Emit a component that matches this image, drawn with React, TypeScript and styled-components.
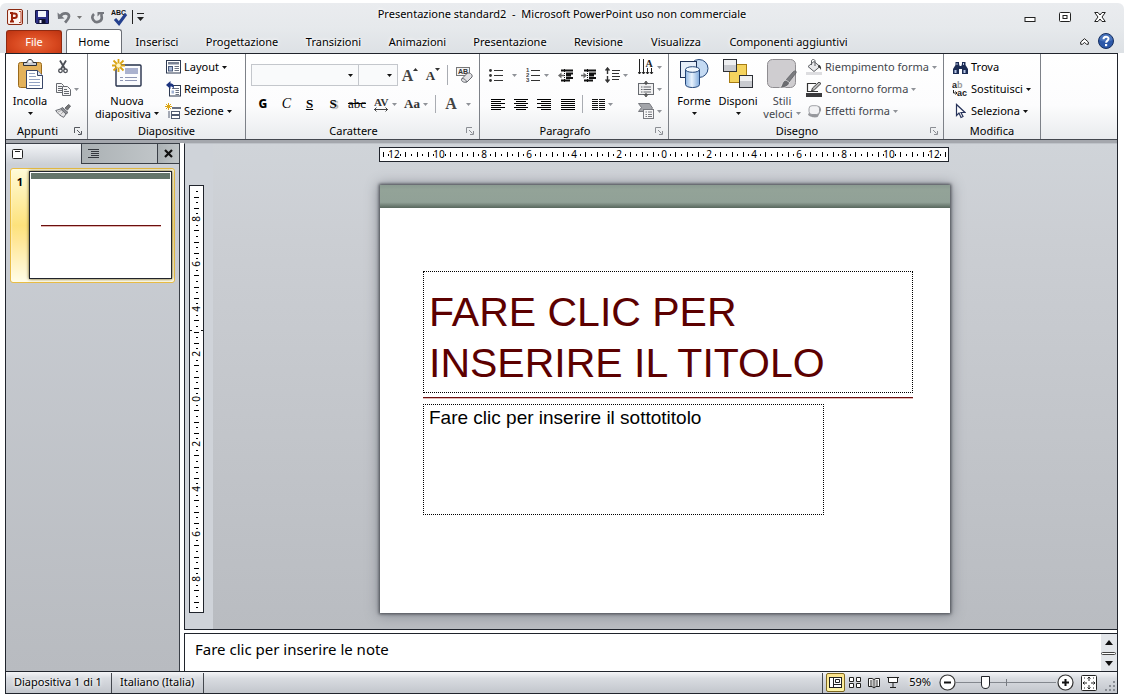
import React from "react";
import styled, { createGlobalStyle, css } from "styled-components";

const ui = `"Noto Sans", "Open Sans", "Liberation Sans", sans-serif`;
const serif = `"Liberation Serif", serif`;
const ink = "#000";
const muted = "#43464c";
const edge = "#20242c";

const GlobalStyle = createGlobalStyle`
  * { box-sizing: border-box; }
  body { margin: 0; background: #fff; font-family: ${ui}; font-size: 11px; line-height: 14px; color: ${ink}; }
  button, select, textarea, input { font: inherit; color: inherit; margin: 0; }
  svg { display: block; flex: none; }
`;

const halo = css`text-shadow: 0 0 3px #fff, 0 0 5px #fff;`;

const Window = styled.div`
  min-height: 100vh;
  display: flex;
  flex-direction: column;
  padding: 3px 0 6px;
`;

/* ---------- title bar and tabs ---------- */

const Header = styled.header`
  background: linear-gradient(#eaecef, #e6e9ec 50%, #dde1e5);
  border-radius: 6px 6px 0 0;
`;

const TitleBar = styled.div`
  height: 26px;
  display: grid;
  grid-template-columns: 1fr auto 1fr;
  align-items: center;
`;

const QuickAccess = styled.div`
  display: flex;
  align-items: center;
  padding-left: 4px;
  padding-top: 2px;
`;

const PlainButton = styled.button<{ $w: number; $h?: number; $muted?: boolean }>`
  width: ${(p) => p.$w}px;
  height: ${(p) => p.$h ?? 22}px;
  flex: none;
  display: flex;
  align-items: center;
  justify-content: center;
  gap: 3px;
  padding: 0;
  border: 0;
  background: none;
  color: ${(p) => (p.$muted ? muted : ink)};
`;

const Title = styled.h1`
  margin: 0;
  padding-bottom: 4px;
  font-size: 11px;
  line-height: 14px;
  font-weight: 400;
  white-space: pre;
  ${halo}
`;

const WindowButtons = styled.div`
  display: flex;
  justify-content: flex-end;
  padding-right: 7px;
  padding-top: 2px;
`;

const TabBar = styled.nav`
  height: 24px;
  display: flex;
  align-items: flex-end;
  padding: 0 9px 0 6px;
`;

const FileTab = styled.button`
  width: 56px;
  height: 23px;
  padding: 0;
  margin-right: 4px;
  border: 1px solid #8e2a12;
  border-bottom: 0;
  border-radius: 3px 3px 0 0;
  background: radial-gradient(ellipse at 50% 60%, #e8683c, #d8481f 55%, #bb3311);
  color: #fff;
`;

const Tab = styled.button<{ $w: number; $active?: boolean }>`
  width: ${(p) => p.$w}px;
  height: 24px;
  flex: none;
  padding: 0;
  white-space: nowrap;
  border: 1px solid ${(p) => (p.$active ? "#6b6f76" : "transparent")};
  border-bottom: 0;
  border-radius: 3px 3px 0 0;
  background: ${(p) => (p.$active ? "#fff" : "none")};
  ${halo}
`;

const TabTools = styled.div`
  margin-left: auto;
  display: flex;
  align-items: center;
  height: 24px;
  gap: 2px;
`;

/* ---------- ribbon ---------- */

const Frame = styled.div`
  flex: 1;
  display: flex;
  flex-direction: column;
  margin: 0 6px 0 5px;
  border: 1px solid ${edge};
`;

const Ribbon = styled.div`
  height: 86px;
  display: flex;
  background: linear-gradient(#fff, #fcfcfd 60%, #e9ebee);
  border-bottom: 1px solid #44484f;
`;

const Group = styled.section<{ $w: number }>`
  width: ${(p) => p.$w}px;
  flex: none;
  display: grid;
  grid-template-rows: 68px 15px;
  padding-top: 1px;
  border-right: 1px solid #7d8188;
`;

const GroupBody = styled.div<{ $pad?: number }>`
  display: flex;
  align-items: flex-start;
  padding-left: ${(p) => p.$pad ?? 0}px;
`;

const GroupFooter = styled.div<{ $launcher: boolean }>`
  display: grid;
  grid-template-columns: ${(p) => (p.$launcher ? "1fr 18px" : "1fr")};
  align-items: center;
  > button { margin-left: 4px; }
`;

const GroupName = styled.h2`
  margin: 0;
  font-size: 11px;
  line-height: 14px;
  font-weight: 400;
  text-align: center;
`;

const BigButton = styled.button<{ $w: number; $muted?: boolean }>`
  width: ${(p) => p.$w}px;
  height: 68px;
  flex: none;
  display: flex;
  flex-direction: column;
  align-items: center;
  padding: 3px 0 0;
  border: 0;
  background: none;
  color: ${(p) => (p.$muted ? muted : ink)};
  line-height: 13px;
  white-space: nowrap;
`;

const BigIcon = styled.span`
  height: 36px;
  display: flex;
  align-items: flex-start;
  padding-top: 1px;
`;

const ArrowLine = styled.span`
  height: 13px;
  display: flex;
  align-items: center;
  gap: 3px;
`;

const Stack = styled.div<{ $ml?: number }>`
  display: flex;
  flex-direction: column;
  align-items: flex-start;
  padding-top: 1px;
  margin-left: ${(p) => p.$ml ?? 0}px;
`;

const RowButton = styled.button<{ $muted?: boolean }>`
  height: 22px;
  display: flex;
  align-items: center;
  gap: 3px;
  padding: 0;
  border: 0;
  background: none;
  white-space: nowrap;
  color: ${(p) => (p.$muted ? muted : ink)};
`;

const RowIcon = styled.span`
  width: 16px;
  display: flex;
  justify-content: center;
`;

const Rows = styled.div`
  display: flex;
  flex-direction: column;
  gap: 7px;
  padding-top: 9px;
`;

const Row = styled.div`
  height: 22px;
  display: flex;
  align-items: center;
`;

const ComboWrap = styled.label<{ $w: number }>`
  width: ${(p) => p.$w}px;
  height: 22px;
  display: grid;
  align-items: center;
  justify-items: end;
  margin-right: -1px;
  > * { grid-area: 1 / 1; }
  > svg { margin-right: 6px; pointer-events: none; }
`;

const Combo = styled.select`
  appearance: none;
  width: 100%;
  height: 22px;
  padding: 0 4px;
  border: 1px solid #c4c7cc;
  border-radius: 0;
  background: #f9fafb;
`;

const Divider = styled.span<{ $h?: number; $mx?: number; $c?: string }>`
  width: 1px;
  height: ${(p) => p.$h ?? 18}px;
  margin: 0 ${(p) => p.$mx ?? 4}px;
  flex: none;
  background: ${(p) => p.$c ?? "#a9acb2"};
`;

const Glyph = styled.span<{ $kind: "bold" | "italic" | "under" | "shadow" | "strike" | "serif" | "large" | "small" }>`
  font-family: ${serif};
  font-size: 13px;
  line-height: 16px;
  ${(p) => p.$kind === "bold" && css`font-family: ${ui}; font-size: 12px; font-weight: 800;`}
  ${(p) => p.$kind === "italic" && css`font-style: italic; font-size: 14px;`}
  ${(p) => p.$kind === "under" && css`font-weight: 700; text-decoration: underline;`}
  ${(p) => p.$kind === "shadow" && css`font-weight: 700; text-shadow: 2px 1px 1px #999;`}
  ${(p) => p.$kind === "strike" && css`text-decoration: line-through;`}
  ${(p) => p.$kind === "serif" && css`font-weight: 700; color: #333;`}
  ${(p) => p.$kind === "large" && css`font-weight: 700; font-size: 16px; line-height: 20px; color: #444;`}
  ${(p) => p.$kind === "small" && css`font-weight: 700; font-size: 13px; line-height: 20px; color: #333;`}
`;

const SizeButton = styled.button<{ $w: number }>`
  width: ${(p) => p.$w}px;
  height: 22px;
  display: flex;
  align-items: flex-start;
  justify-content: center;
  padding: 2px 0 0;
  border: 0;
  background: none;
`;

/* ---------- work area ---------- */

const Main = styled.main`
  flex: 1;
  display: grid;
  grid-template-columns: 174px 1fr;
  column-gap: 4px;
  border-top: 3px solid #a4a7ad;
`;

const Outline = styled.aside`
  display: flex;
  flex-direction: column;
  border: 1px solid #3a3f47;
  border-left: 0;
  border-bottom: 0;
  background: linear-gradient(#cdd1d7, #b8bbc0);
`;

const PaneTabs = styled.div`
  height: 20px;
  display: grid;
  grid-template-columns: 75px 76px 1fr;
`;

const PaneTab = styled.button<{ $active?: boolean }>`
  display: flex;
  align-items: center;
  padding: 0 0 0 6px;
  border: 0;
  border-left: ${(p) => (p.$active ? "0" : "1px solid #3a3f47")};
  border-bottom: ${(p) => (p.$active ? "0" : "1px solid #3a3f47")};
  background: ${(p) => (p.$active ? "linear-gradient(#f2f4f7, #cdd1d7)" : "linear-gradient(90deg, #abb1b4, #c0c5c8)")};
`;

const Thumb = styled.a`
  margin: 4px 4px 0;
  height: 115px;
  display: grid;
  grid-template-columns: 18px 1fr;
  padding: 2px 2px 3px 0;
  border: 1px solid #e8bd45;
  border-radius: 3px;
  background: linear-gradient(#fffbd8, #fde27c 50%, #ffe694 62%, #fffde8);
  box-shadow: inset 0 0 2px #fff;
  color: ${ink};
  text-decoration: none;
`;

const ThumbNumber = styled.span`
  padding-top: 4px;
  text-align: center;
  font-weight: 700;
`;

const ThumbSlide = styled.span`
  display: flex;
  flex-direction: column;
  border: 1px solid ${edge};
  padding: 1px;
  background: #fff;
  box-shadow: 0 0 3px #5a4a10;
`;

const ThumbBand = styled.span`
  height: 6px;
  background: #64756a;
`;

const ThumbRule = styled.span`
  height: 1px;
  margin: 46px 9px 0 10px;
  background: #6b0f0f;
  box-shadow: 0 1px 0 #e0b5b0;
`;

const Editor = styled.div`
  display: grid;
  grid-template-rows: 1fr 38px;
  row-gap: 3px;
  min-width: 0;
`;

const Stage = styled.div`
  display: grid;
  grid-template-columns: 28px 1fr;
  grid-template-rows: 20px 1fr;
  border: 1px solid ${edge};
  border-top-color: #bfc3c9;
  border-right: 0;
  background: linear-gradient(#d0d4d9, #cbced3 20%, #b9bcc1);
`;

const RulerTop = styled.div`
  grid-column: 2;
  display: flex;
  justify-content: center;
  padding: 3px 2px 0 0;
`;

const RulerSide = styled.div`
  grid-row: 1 / 3;
  grid-column: 1;
  padding: 41px 0 0 4px;
  background: #cfd3d9;
`;

const Canvas = styled.div`
  display: flex;
  justify-content: center;
  align-items: flex-start;
  padding: 21px 0 15px;
`;

const Slide = styled.article`
  width: 570px;
  min-height: 428px;
  background: #fff;
  box-shadow: 0 0 3px 1px #45494f, 0 1px 12px 2px #8b8f96;
`;

const Band = styled.div`
  height: 23px;
  margin-bottom: 63px;
  background: linear-gradient(#8b9b91, #93a398 20%, #91a197 75%, #57665c);
`;

const TitleBox = styled.div`
  width: 490px;
  height: 122px;
  margin-left: 43px;
  padding: 15px 5px 0;
  border: 1px dotted #000;
`;

const SlideTitle = styled.h3`
  margin: 0;
  font: 400 41px/51px "Liberation Sans", Arial, sans-serif;
  color: #5c0000;
`;

const RedRule = styled.hr`
  width: 490px;
  height: 1px;
  margin: 4px 0 6px 43px;
  border: 0;
  background: #6b0f0f;
  box-shadow: 0 1px 0 #e3b9b4;
`;

const SubtitleBox = styled.div`
  width: 401px;
  height: 111px;
  margin-left: 43px;
  padding: 2px 5px;
  border: 1px dotted #000;
  font: 400 19px/22px "Liberation Sans", Arial, sans-serif;
`;

const NotesPane = styled.div`
  display: grid;
  grid-template-columns: 1fr 16px;
  border: 1px solid ${edge};
  border-right: 0;
  border-bottom: 0;
  background: #fff;
`;

const Notes = styled.textarea`
  resize: none;
  border: 0;
  outline: 0;
  padding: 5px 10px;
  background: none;
  font-size: 15px;
  line-height: 20px;
  height: 37px;
  overflow: hidden;
`;

const Scroller = styled.div`
  display: flex;
  flex-direction: column;
  justify-content: space-between;
  background: #e3e6ea;
`;

/* ---------- status bar ---------- */

const StatusBar = styled.footer`
  height: 22px;
  display: flex;
  align-items: center;
  border-top: 1px solid ${edge};
  background: linear-gradient(#f4f5f7, #d9dce1 30%, #c2c6cc);
  white-space: nowrap;
`;

const StatusItem = styled.span<{ $w: number }>`
  width: ${(p) => p.$w}px;
  flex: none;
  padding: 0 0 2px 8px;
  ${halo}
`;

const Spacer = styled.span`
  flex: 1;
`;

const ViewButton = styled.button<{ $active?: boolean }>`
  width: 19px;
  height: 19px;
  display: flex;
  align-items: center;
  justify-content: center;
  padding: 0;
  border: 1px solid ${(p) => (p.$active ? "#7d6720" : "transparent")};
  border-radius: 2px;
  background: ${(p) => (p.$active ? "linear-gradient(#fbe28a, #fff6a8)" : "none")};
`;

const ZoomRange = styled.input`
  appearance: none;
  width: 100px;
  height: 16px;
  background:
    linear-gradient(#777b82, #777b82) 50% 50% / 1px 7px no-repeat,
    linear-gradient(#83878e, #83878e) 0 50% / 100% 1px no-repeat;
  &::-webkit-slider-thumb {
    appearance: none;
    width: 9px;
    height: 13px;
    border: 1px solid #22252b;
    border-radius: 1px 1px 5px 5px;
    background: #fff;
  }
`;

const ZoomValue = styled.output`
  width: 36px;
  padding-bottom: 2px;
  text-align: center;
  ${halo}
`;

/* ---------- small drawings ---------- */

const Arrow = ({ c = "#111" }: { c?: string }) => (
  <svg width="5" height="3" viewBox="0 0 5 3"><path d="M0 0h5L2.500 3z" fill={c} /></svg>
);
const grey = "#8f9298";

const Launcher = ({ c = "#8b8e94" }: { c?: string }) => (
  <svg width="8" height="8" viewBox="0 0 8 8" fill="none" stroke={c}>
    <path d="M.5 6V.5H6M3 3l3.500 3.500M7.500 4v3.500H4" />
  </svg>
);

const PptLogo = () => (
  <svg width="16" height="16" viewBox="0 0 16 16">
    <rect x=".5" y=".5" width="15" height="15" rx="1.500" fill="#fbe9e2" stroke="#8a2a12" />
    <path d="M11.500 2.500h2.500v11h-2.500z" fill="#fff" stroke="#b5452a" />
    <path d="M1.500 2.500L12 1v14L1.500 13.500z" fill="#fdf3ee" />
    <path d="M5 12.500V4.500h2.500a2.300 2.300 0 0 1 0 4.600H5M3 12.500h4M3 4h3" fill="none" stroke="#9c2208" strokeWidth="2" />
  </svg>
);
const Save = () => (
  <svg width="14" height="14" viewBox="0 0 14 14">
    <path d="M.5.5h13v13h-12l-1-1z" fill="#2b2f86" stroke="#12143f" />
    <rect x="3" y="1" width="8" height="6" fill="#f2f5fb" />
    <rect x="3.500" y="9" width="7" height="4.500" fill="#0d0f2c" />
    <rect x="4.500" y="10" width="2" height="3" fill="#eef" />
  </svg>
);
const Undo = () => (
  <svg width="14" height="13" viewBox="0 0 14 13" fill="none" stroke="#74777d">
    <path d="M3.500 5.500C5 1.500 12.300 1 12 5.500c-.2 2.500-2 4-4 6" strokeWidth="2.800" /><path d="M.5 1.500L1 8l6.500-.5z" fill="#74777d" stroke="none" />
  </svg>
);
const Redo = () => (
  <svg width="13" height="13" viewBox="0 0 13 13" fill="none" stroke="#74777d">
    <path d="M3 3A4.600 4.600 0 1 0 10.500 5V2.500" strokeWidth="2.600" /><path d="M6.500 5.500V1H13v2H9z" fill="#74777d" stroke="none" />
  </svg>
);
const Spell = () => (
  <svg width="17" height="17" viewBox="0 0 17 17">
    <text x="0" y="6" fontFamily="Liberation Sans" fontWeight="700" fontSize="7" fill="#111">ABC</text>
    <path d="M4 10l4 4.500L15 5" fill="none" stroke="#24408e" strokeWidth="3" />
  </svg>
);
const Customize = () => (
  <svg width="7" height="8" viewBox="0 0 7 8"><path d="M0 0h7v1H0zM0 4h7L3.500 8z" fill="#222" /></svg>
);
const Minimize = () => (
  <svg width="12" height="12" viewBox="0 0 12 12"><rect x="1" y="6.500" width="10" height="4" fill="#fff" stroke="#222" /></svg>
);
const Maximize = () => (
  <svg width="12" height="12" viewBox="0 0 12 12" fill="#fff" stroke="#222"><rect x=".5" y="1.500" width="11" height="9" rx="1" /><rect x="4" y="4.500" width="4" height="3" /></svg>
);
const CloseWin = () => (
  <svg width="12" height="12" viewBox="0 0 12 12" fill="#fff" stroke="#222">
    <path d="M.7 1.500h3.300L6 4l2-2.500h3.300L8 6l3.300 4.500H8L6 8l-2 2.500H.7L4 6z" />
  </svg>
);
const Collapse = () => (
  <svg width="9" height="7" viewBox="0 0 9 7"><path d="M4.500.7L8.300 4v2.300H6.500l-2-2-2 2H.7V4z" fill="#fff" stroke="#222" /></svg>
);
const Help = () => (
  <svg width="16" height="16" viewBox="0 0 16 16">
    <circle cx="8" cy="8" r="7.500" fill="#2c58a8" stroke="#173060" />
    <path d="M1.500 7a6.500 6 0 0 1 13 0c-4 2-9 2-13 0z" fill="#5d86c8" opacity=".6" />
    <path d="M5.500 6.200c0-3.400 5-3.200 5-.4 0 1.800-2.400 1.900-2.400 4" fill="none" stroke="#fff" strokeWidth="2" />
    <rect x="7" y="11" width="2.200" height="2.200" fill="#fff" />
  </svg>
);

const Paste = () => (
  <svg width="28" height="31" viewBox="0 0 28 31">
    <rect x="2.500" y="3.500" width="23" height="25" rx="2" fill="#e3b25c" stroke="#9a6a1c" />
    <path d="M7.500 6.500v-3H11c0-4 6-4 6 0h3.500v3z" fill="#c9ccd2" stroke="#2d3036" />
    <rect x="12.500" y="1.500" width="3" height="2" fill="#fff" />
    <path d="M10.500 11.500h11l5 5v13h-16z" fill="#fff" stroke="#384668" />
    <path d="M21.500 11.500v5h5" fill="#dfe5f0" stroke="#384668" />
    <path d="M13 14.500h6M13 17.500h7M13 20.500h11M13 23.500h11M13 26.500h11" stroke="#93a3c3" />
  </svg>
);
const Cut = () => (
  <svg width="10" height="14" viewBox="0 0 10 14" fill="none" stroke="#4d5057">
    <path d="M2 .5L7 9M8 .5L3 9" strokeWidth="1.800" /><circle cx="2.500" cy="10.800" r="1.800" strokeWidth="1.300" /><circle cx="7.500" cy="10.800" r="1.800" strokeWidth="1.300" />
  </svg>
);
const Copy = () => (
  <svg width="15" height="13" viewBox="0 0 15 13" fill="#f6f6f7" stroke="#66696f">
    <path d="M.5.5h5l2 2v7h-7z" /><path d="M2 3.500h4M2 5.500h4M2 7.500h4" /><path d="M6.500 3.500h5l3 3v6h-8z" /><path d="M8 6.500h3M8 8.500h5M8 10.500h5" />
  </svg>
);
const Painter = () => (
  <svg width="16" height="14" viewBox="0 0 16 14" stroke="#66696f">
    <path d="M10 4l3.500-3.500 2 1.500L12.500 6z" fill="#777" /><path d="M7.500 3.500l5.500 5-2 1.500-5.500-5z" fill="#8b8d92" /><path d="M5.500 5L.7 6.500c2 3 4.500 5.500 8 6.800L11 10z" fill="#e4e4e6" /><path d="M3 8l3-1.500M5.500 10.500L8 8" stroke="#aaa" />
  </svg>
);
const NewSlide = () => (
  <svg width="30" height="29" viewBox="0 0 30 29">
    <rect x="4" y="6" width="25" height="21" rx="1" fill="#fbfcfe" stroke="#25304a" strokeWidth="1.400" />
    <rect x="13" y="9" width="13" height="6" fill="#aab2cf" /><path d="M8 18.500h3M13 18.500h12M8 21.500h3M13 21.500h12" stroke="#8e96b4" />
    <g stroke="#dba514" strokeWidth="1.800"><path d="M6.500 0v13M0 6.500h13M1.500 1.500l10 10M11.500 1.500l-10 10" /></g><circle cx="6.500" cy="6.500" r="2.300" fill="#fff6c0" />
  </svg>
);
const LayoutIcon = () => (
  <svg width="15" height="14" viewBox="0 0 15 14">
    <rect x=".5" y=".5" width="14" height="12.500" fill="#fff" stroke="#2d3950" /><rect x="2" y="2" width="11" height="2.500" fill="#7a8395" />
    <rect x="2.500" y="6.500" width="4" height="4.500" fill="#a9bad8" stroke="#4a5a7c" /><path d="M8.500 6.500H13M8.500 8.500H13M8.500 10.500H13" stroke="#6c7484" />
  </svg>
);
const Reset = () => (
  <svg width="15" height="16" viewBox="0 0 15 16">
    <rect x="3.500" y="4.500" width="11" height="10.500" fill="#fff" stroke="#2d3950" /><path d="M6 7.500h7M9.500 9.500H13M9.500 11.500H13M9.500 13.500H13" stroke="#6c7484" /><rect x="5.500" y="9.500" width="2.500" height="3" fill="#9fb1d3" />
    <path d="M0 4l4.500-4v2.500C8 2.500 8.500 5 7.500 8 7 6 6 5.500 4.500 5.500V8z" fill="#1d3580" />
  </svg>
);
const SectionIcon = () => (
  <svg width="16" height="16" viewBox="0 0 16 16">
    <path d="M3.500 0v7M0 3.500h7M1 1l5 5M6 1L1 6" stroke="#dba514" /><rect x="7" y="4" width="9" height="2" fill="#6b7283" />
    <rect x="6.500" y="8.500" width="8" height="3" fill="#fff" stroke="#515b70" /><rect x="6.500" y="12.500" width="8" height="3" fill="#fff" stroke="#515b70" /><path d="M4 8v7" stroke="#515b70" />
  </svg>
);
const UpMark = () => (
  <svg width="5" height="6" viewBox="0 0 5 6"><path d="M0 5h5L2.500 2z" fill="#333" /></svg>
);
const DownMark = () => (
  <svg width="5" height="6" viewBox="0 0 5 6"><path d="M0 2h5L2.500 5z" fill="#333" /></svg>
);
const Eraser = () => (
  <svg width="17" height="16" viewBox="0 0 17 16">
    <rect x=".5" y=".5" width="13" height="8" fill="#f4f4f5" stroke="#777" /><text x="2" y="7" fontSize="7" fontFamily="Liberation Sans" fontWeight="700" fill="#333">AB</text>
    <path d="M5.500 12l5.500-5.500c2-1.500 6 .5 5 3.500l-5 5c-3 1-6-.5-5.500-3z" fill="#e1e1e4" stroke="#66696f" /><path d="M6 11.500c2 0 4 1 4.500 3.500" stroke="#66696f" fill="none" />
  </svg>
);
const Kerning = () => (
  <svg width="16" height="15" viewBox="0 0 16 15">
    <text x="1" y="9" fontSize="11" fontFamily="Liberation Serif" fontWeight="700" fill="#333">AV</text>
    <path d="M1 12.500h14M3.500 10.500l-2 2 2 2M12.500 10.500l2 2-2 2" fill="none" stroke="#444" />
  </svg>
);
const Bullets = () => (
  <svg width="14" height="13" viewBox="0 0 14 13"><g fill="#333"><circle cx="1.500" cy="1.500" r="1.400" /><circle cx="1.500" cy="6.500" r="1.400" /><circle cx="1.500" cy="11.500" r="1.400" /></g><path d="M5 1.500h9M5 6.500h9M5 11.500h9" stroke="#333" /></svg>
);
const Numbers = () => (
  <svg width="15" height="14" viewBox="0 0 15 14"><g fontSize="6" fontFamily="Liberation Sans" fontWeight="700" fill="#444"><text x="0" y="4">1</text><text x="0" y="9">2</text><text x="0" y="14">3</text></g><path d="M5 2.500h9M5 7.500h9M5 12.500h9" stroke="#333" /></svg>
);
const Indent = ({ out }: { out?: boolean }) => (
  <svg width="16" height="13" viewBox="0 0 16 13" stroke="#111">
    <path d="M3 1.500h12M8 4.500h7M8 6.500h5M8 9h7M3 11.500h9" strokeWidth="1.800" /><path d="M6.500 0v13" strokeDasharray="1 1" />
    <path d={out ? "M0 6.500l3.500-3v6z" : "M6 6.500l-3.500-3v6z"} fill="#666" stroke="none" /><path d={out ? "M3 6.500h3" : "M0 6.500h3"} stroke="#666" strokeWidth="1.500" />
  </svg>
);
const Spacing = () => (
  <svg width="15" height="16" viewBox="0 0 15 16" fill="none" stroke="#333"><path d="M2.500 1v6M.5 3.500l2-2.500 2 2.500M2.500 9v6M.5 12.500l2 2.500 2-2.500" strokeWidth="1.400" /><path d="M7 3.500h8M7 6.500h7M7 9.500h8M7 12.500h7" /></svg>
);
const Align = ({ kind }: { kind: "l" | "c" | "r" | "j" }) => (
  <svg width="14" height="11" viewBox="0 0 14 11">
    {[0, 1, 2, 3, 4, 5].map((i) => {
      const w = kind === "j" || i % 2 === 0 ? 14 : 10;
      const x = kind === "r" ? 14 - w : kind === "c" ? (14 - w) / 2 : 0;
      return <rect key={i} x={x} y={i * 2} width={w} height="1" fill="#000" />;
    })}
  </svg>
);
const Columns = () => (
  <svg width="13" height="11" viewBox="0 0 13 11">{[0, 2, 4, 6, 8, 10].map((y) => <path key={y} d={`M0 ${y}h6v1H0zM7 ${y}h6v1H7z`} fill="#111" />)}</svg>
);
const Direction = () => (
  <svg width="16" height="16" viewBox="0 0 16 16" stroke="#222"><path d="M1.500 0v15M5.500 0v15M9.500 9v6M13.500 9v6M0 13l1.500 2L3 13M4 13l1.500 2L7 13M8 13l1.500 2 1.500-2M12 13l1.500 2 1.500-2" fill="none" /><text x="7.500" y="8" fontSize="10" fontFamily="Liberation Serif" fontWeight="700" fill="#222" stroke="none">A</text></svg>
);
const AlignText = () => (
  <svg width="16" height="16" viewBox="0 0 16 16" stroke="#66696f"><rect x=".5" y="2.500" width="15" height="11" fill="#f0f0f1" /><path d="M3 6h1.500M5.500 6H13M3 8.500h1.500M5.500 8.500H13M3 11h1.500M5.500 11H13" /><path d="M8 0v4M6 2.500l2-2 2 2M8 16v-4M6 13.500l2 2 2-2" fill="none" stroke="#333" /></svg>
);
const SmartArt = () => (
  <svg width="16" height="16" viewBox="0 0 16 16" stroke="#77797f"><path d="M.5.5h11l3 4.500-3 3.500H.5l3-4z" fill="#a3a5aa" /><rect x="5.500" y="6.500" width="10" height="9" fill="#f6f6f7" /><path d="M7.500 9h1.500M10 9h4M7.500 11.500h1.500M10 11.500h4M7.500 13.500h1.500M10 13.500h4" /></svg>
);
const Shapes = () => (
  <svg width="30" height="30" viewBox="0 0 30 30">
    <defs><linearGradient id="cyl"><stop offset="0" stopColor="#8fb6e4" /><stop offset=".45" stopColor="#e9f3fd" /><stop offset="1" stopColor="#7ea9dc" /></linearGradient></defs>
    <circle cx="20" cy="9.500" r="9" fill="#c4daf3" stroke="#24477a" /><rect x="1.500" y="2.500" width="16" height="16" fill="#e6eef9" stroke="#1c2f55" />
    <path d="M6.500 10.500v15c0 4 14 4 14 0v-15" fill="url(#cyl)" stroke="#24477a" /><ellipse cx="13.500" cy="10.500" rx="7" ry="2.800" fill="#f2f8fe" stroke="#24477a" />
  </svg>
);
const Arrange = () => (
  <svg width="30" height="30" viewBox="0 0 30 30">
    <rect x="6.500" y="5.500" width="17" height="18" fill="#f4d35e" stroke="#a77c12" /><rect x=".5" y=".5" width="13" height="12" fill="#eeeff1" stroke="#2d3036" /><rect x="1" y="6" width="12" height="6" fill="#c8cacf" />
    <rect x="16.500" y="16.500" width="13" height="12" fill="#eeeff1" stroke="#2d3036" /><rect x="17" y="22" width="12" height="6" fill="#c8cacf" />
  </svg>
);
const Styles = () => (
  <svg width="30" height="31" viewBox="0 0 30 31">
    <rect x=".5" y=".5" width="28" height="28" rx="5" fill="#cfcdd0" stroke="#8f8d91" /><path d="M26 13c2-2 4-1 3 1l-7 9-3-2z" fill="#7b7c80" stroke="#56575b" strokeWidth=".7" />
    <path d="M19 21l3.500 2.500c0 3-5 6-10 5.500 3-1.500 2-7 6.500-8z" fill="#6b6c70" stroke="#fff" strokeWidth=".6" />
  </svg>
);
const Fill = () => (
  <svg width="16" height="16" viewBox="0 0 16 16"><path d="M2 7.500l6-5 6 5-6 5z" fill="#e9e9eb" stroke="#5d5f64" /><path d="M5.500 6V2c0-2 3.500-2 3.500 0v5" fill="none" stroke="#5d5f64" /><path d="M12.500 6c2 0 3 2 2.500 5-1-2-1.500-2.500-3-3z" fill="#333" /><rect y="13" width="16" height="3" fill="#dddde0" /></svg>
);
const OutlineIcon = () => (
  <svg width="16" height="15" viewBox="0 0 16 15"><path d="M10 1.500H1.500v8H12" fill="none" stroke="#333" strokeWidth="1.200" /><path d="M5.500 9l1-3L13 0l2 1.500-6.500 6.300z" fill="#bbb" stroke="#333" strokeWidth=".9" /><rect y="11" width="16" height="4" fill="#3a3a3d" /></svg>
);
const Effects = () => (
  <svg width="15" height="13" viewBox="0 0 15 13"><path d="M1 9c0 3 8.500 4.500 10 2.500l3-6c.5-2-1-4-2.500-4.500z" fill="#96979c" /><rect x="2" y=".7" width="10.500" height="8.800" rx="3" fill="#f2f2f4" stroke="#8c8e93" strokeWidth=".8" /></svg>
);
const Find = () => (
  <svg width="15" height="13" viewBox="0 0 15 13" fill="#1c2c54"><path d="M2.500 1h3.500v2l.7 2h1.600L9 3V1h3.500v3L15 8v5H9V8H6v5H0V8l2.500-4z" /><path d="M1.500 9h2v3h-2zM10.500 9h2v3h-2zM3.500 2h1v2h-1zM10 2h1v2h-1z" fill="#b9c8e8" /></svg>
);
const Replace = () => (
  <svg width="16" height="16" viewBox="0 0 16 16"><g fontFamily="Liberation Sans" fontWeight="700" fontSize="9"><text x="0" y="7" fill="#222">a</text><text x="5" y="7" fill="#999">b</text><text x="5" y="15" fill="#222">ac</text></g><path d="M1.500 9v3H5M3.500 10.500L5 12l-1.500 1.500" fill="none" stroke="#222" /></svg>
);
const Pointer = () => (
  <svg width="11" height="16" viewBox="0 0 11 16"><path d="M1.500 1.500v11L4 10l2 4.500 2-1L6 9.500h4z" fill="#fff" stroke="#27335a" strokeWidth="1.200" /></svg>
);

/* ---------- rulers ---------- */

const marks = (limit: number, center: number) =>
  Array.from({ length: limit * 8 + 9 }, (_, i) => i - limit * 4 - 4).map((n) => ({
    at: Math.round(center + (n * 45) / 8),
    label: n % 8 === 0 ? Math.abs(n / 4) : null,
    tall: n % 2 === 0,
  }));

const HRuler = () => (
  <svg width="570" height="15" viewBox="0 0 570 15">
    <rect x=".5" y=".5" width="569" height="14" fill="#fff" stroke={edge} />
    {marks(12, 285).filter((m) => m.at > 2 && m.at < 567).map((m) =>
      m.label !== null ? (
        <text key={m.at} x={m.at} y="11" textAnchor="middle" fontFamily="Noto Sans, sans-serif" fontSize="10" fill="#000">{m.label}</text>
      ) : (
        <rect key={m.at} x={m.at} y={m.tall ? 5 : 7} width="1" height={m.tall ? 5 : 2} fill="#000" />
      )
    )}
  </svg>
);

const VRuler = () => (
  <svg width="15" height="428" viewBox="0 0 15 428">
    <rect x=".5" y=".5" width="14" height="427" fill="#fff" stroke={edge} />
    {marks(9, 214).filter((m) => m.at > 2 && m.at < 425).map((m) =>
      m.label !== null ? (
        <text key={m.at} transform={`translate(11 ${m.at}) rotate(-90)`} textAnchor="middle" fontFamily="Noto Sans, sans-serif" fontSize="10" fill="#000">{m.label}</text>
      ) : (
        <rect key={m.at} x={m.tall ? 5 : 7} y={m.at} width={m.tall ? 5 : 2} height="1" fill="#000" />
      )
    )}
    <path d="M1 145.500h2M12 145.500h2" stroke="#111" />
  </svg>
);

const tabs: [string, number][] = [
  ["Inserisci", 70], ["Progettazione", 100], ["Transizioni", 83], ["Animazioni", 85],
  ["Presentazione", 100], ["Revisione", 77], ["Visualizza", 78], ["Componenti aggiuntivi", 147],
];

const RibbonGroup = ({ name, w, pad, launcher, children }: { name: string; w: number; pad?: number; launcher?: string; children: React.ReactNode }) => (
  <Group $w={w} aria-label={name}>
    <GroupBody $pad={pad}>{children}</GroupBody>
    <GroupFooter $launcher={!!launcher}>
      <GroupName>{name}</GroupName>
      {launcher && <PlainButton $w={10} $h={14} aria-label={`Opzioni ${name}`}><Launcher c={launcher} /></PlainButton>}
    </GroupFooter>
  </Group>
);

export default function App() {
  return (
    <>
      <GlobalStyle />
      <Window>
        <Header>
          <TitleBar>
            <QuickAccess>
              <PlainButton $w={22} aria-label="PowerPoint"><PptLogo /></PlainButton>
              <Divider $h={14} $mx={1} $c="#666" />
              <PlainButton $w={26} aria-label="Salva"><Save /></PlainButton>
              <PlainButton $w={18} aria-label="Annulla"><Undo /></PlainButton>
              <PlainButton $w={12} aria-label="Elenco annulla"><Arrow c="#777" /></PlainButton>
              <PlainButton $w={24} aria-label="Ripeti"><Redo /></PlainButton>
              <PlainButton $w={20} aria-label="Controllo ortografia"><Spell /></PlainButton>
              <Divider $h={14} $mx={3} $c="#222" />
              <PlainButton $w={8} aria-label="Personalizza"><Customize /></PlainButton>
            </QuickAccess>
            <Title>Presentazione standard2  -  Microsoft PowerPoint uso non commerciale</Title>
            <WindowButtons>
              <PlainButton $w={35} aria-label="Riduci a icona"><Minimize /></PlainButton>
              <PlainButton $w={35} aria-label="Ingrandisci"><Maximize /></PlainButton>
              <PlainButton $w={35} aria-label="Chiudi"><CloseWin /></PlainButton>
            </WindowButtons>
          </TitleBar>
          <TabBar>
            <FileTab>File</FileTab>
            <Tab $w={56} $active>Home</Tab>
            {tabs.map(([t, w]) => <Tab key={t} $w={w}>{t}</Tab>)}
            <TabTools>
              <PlainButton $w={22} aria-label="Riduci barra multifunzione"><Collapse /></PlainButton>
              <PlainButton $w={18} aria-label="Guida"><Help /></PlainButton>
            </TabTools>
          </TabBar>
        </Header>

        <Frame>
          <Ribbon>
            <RibbonGroup name="Appunti" w={82} launcher="#55585e">
              <BigButton $w={48}><BigIcon><Paste /></BigIcon>Incolla<ArrowLine><Arrow /></ArrowLine></BigButton>
              <Stack>
                <PlainButton $w={18} aria-label="Taglia"><Cut /></PlainButton>
                <PlainButton $w={27} aria-label="Copia"><Copy /><Arrow c={grey} /></PlainButton>
                <PlainButton $w={18} aria-label="Copia formato"><Painter /></PlainButton>
              </Stack>
            </RibbonGroup>

            <RibbonGroup name="Diapositive" w={158} pad={4}>
              <BigButton $w={70}><BigIcon><NewSlide /></BigIcon>Nuova<ArrowLine>diapositiva<Arrow /></ArrowLine></BigButton>
              <Stack $ml={3}>
                <RowButton><RowIcon><LayoutIcon /></RowIcon>Layout<Arrow /></RowButton>
                <RowButton><RowIcon><Reset /></RowIcon>Reimposta</RowButton>
                <RowButton><RowIcon><SectionIcon /></RowIcon>Sezione<Arrow /></RowButton>
              </Stack>
            </RibbonGroup>

            <RibbonGroup name="Carattere" w={234} pad={5} launcher="#8b8e94">
              <Rows>
                <Row>
                  <ComboWrap $w={108}><Combo aria-label="Tipo di carattere"><option /></Combo><Arrow /></ComboWrap>
                  <ComboWrap $w={40}><Combo aria-label="Dimensione carattere"><option /></Combo><Arrow /></ComboWrap>
                  <SizeButton $w={26} aria-label="Aumenta carattere"><Glyph $kind="large">A</Glyph><UpMark /></SizeButton>
                  <SizeButton $w={20} aria-label="Riduci carattere"><Glyph $kind="small">A</Glyph><DownMark /></SizeButton>
                  <Divider $h={20} $mx={4} />
                  <PlainButton $w={24} aria-label="Cancella formattazione"><Eraser /></PlainButton>
                </Row>
                <Row>
                  <PlainButton $w={24} aria-label="Grassetto"><Glyph $kind="bold">G</Glyph></PlainButton>
                  <PlainButton $w={23} aria-label="Corsivo"><Glyph $kind="italic">C</Glyph></PlainButton>
                  <PlainButton $w={23} aria-label="Sottolineato"><Glyph $kind="under">S</Glyph></PlainButton>
                  <PlainButton $w={24} aria-label="Ombreggiatura"><Glyph $kind="shadow">S</Glyph></PlainButton>
                  <PlainButton $w={24} aria-label="Barrato"><Glyph $kind="strike">abc</Glyph></PlainButton>
                  <PlainButton $w={32} aria-label="Spaziatura"><Kerning /><Arrow c={grey} /></PlainButton>
                  <PlainButton $w={30} aria-label="Maiuscole e minuscole"><Glyph $kind="serif">Aa</Glyph><Arrow c={grey} /></PlainButton>
                  <Divider $h={18} $mx={4} />
                  <PlainButton $w={36} aria-label="Colore carattere"><Glyph $kind="large">A</Glyph>&nbsp;<Arrow c={grey} /></PlainButton>
                </Row>
              </Rows>
            </RibbonGroup>

            <RibbonGroup name="Paragrafo" w={189} pad={6} launcher="#8b8e94">
              <Rows>
                <Row>
                  <PlainButton $w={34} aria-label="Elenchi puntati"><Bullets />&nbsp;<Arrow c={grey} /></PlainButton>
                  <PlainButton $w={34} aria-label="Elenchi numerati"><Numbers /><Arrow c={grey} /></PlainButton>
                  <PlainButton $w={24} aria-label="Riduci rientro"><Indent out /></PlainButton>
                  <PlainButton $w={22} aria-label="Aumenta rientro"><Indent /></PlainButton>
                  <PlainButton $w={32} aria-label="Interlinea"><Spacing /><Arrow c={grey} /></PlainButton>
                </Row>
                <Row>
                  <PlainButton $w={23} aria-label="Allinea a sinistra"><Align kind="l" /></PlainButton>
                  <PlainButton $w={23} aria-label="Centra"><Align kind="c" /></PlainButton>
                  <PlainButton $w={24} aria-label="Allinea a destra"><Align kind="r" /></PlainButton>
                  <PlainButton $w={23} aria-label="Giustifica"><Align kind="j" /></PlainButton>
                  <Divider $h={18} $mx={3} />
                  <PlainButton $w={32} aria-label="Colonne"><Columns /><Arrow c={grey} /></PlainButton>
                </Row>
              </Rows>
              <Stack $ml={5}>
                <PlainButton $w={26} aria-label="Orientamento testo"><Direction /><Arrow c={grey} /></PlainButton>
                <PlainButton $w={26} aria-label="Allinea testo"><AlignText /><Arrow c={grey} /></PlainButton>
                <PlainButton $w={26} aria-label="Converti in SmartArt"><SmartArt /><Arrow c={grey} /></PlainButton>
              </Stack>
            </RibbonGroup>

            <RibbonGroup name="Disegno" w={275} pad={4} launcher="#8b8e94">
              <BigButton $w={42}><BigIcon><Shapes /></BigIcon>Forme<ArrowLine><Arrow /></ArrowLine></BigButton>
              <BigButton $w={46}><BigIcon><Arrange /></BigIcon>Disponi<ArrowLine><Arrow /></ArrowLine></BigButton>
              <BigButton $w={42} $muted><BigIcon><Styles /></BigIcon>Stili<ArrowLine>veloci<Arrow c={grey} /></ArrowLine></BigButton>
              <Stack $ml={3}>
                <RowButton $muted><RowIcon><Fill /></RowIcon>Riempimento forma<Arrow c={grey} /></RowButton>
                <RowButton $muted><RowIcon><OutlineIcon /></RowIcon>Contorno forma<Arrow c={grey} /></RowButton>
                <RowButton $muted><RowIcon><Effects /></RowIcon>Effetti forma<Arrow c={grey} /></RowButton>
              </Stack>
            </RibbonGroup>

            <RibbonGroup name="Modifica" w={97} pad={8}>
              <Stack>
                <RowButton><RowIcon><Find /></RowIcon>Trova</RowButton>
                <RowButton><RowIcon><Replace /></RowIcon>Sostituisci<Arrow /></RowButton>
                <RowButton><RowIcon><Pointer /></RowIcon>Seleziona<Arrow /></RowButton>
              </Stack>
            </RibbonGroup>
          </Ribbon>

          <Main>
            <Outline>
              <PaneTabs>
                <PaneTab $active aria-label="Diapositive">
                  <svg width="11" height="10" viewBox="0 0 11 10"><rect x=".5" y=".5" width="10" height="9" rx="1" fill="#fff" stroke="#222" /><path d="M3 2.500h5" stroke="#222" /></svg>
                </PaneTab>
                <PaneTab aria-label="Struttura">
                  <svg width="12" height="10" viewBox="0 0 12 10"><path d="M0 .5h11M3 2.500h8M3 4.500h8M3 6.500h8M0 8.500h11" stroke="#33373d" /></svg>
                </PaneTab>
                <PaneTab aria-label="Chiudi riquadro">
                  <svg width="9" height="9" viewBox="0 0 9 9"><path d="M1 1l7 7M8 1L1 8" stroke="#111" strokeWidth="2.200" /></svg>
                </PaneTab>
              </PaneTabs>
              <Thumb href="#diapositiva-1">
                <ThumbNumber>1</ThumbNumber>
                <ThumbSlide><ThumbBand /><ThumbRule /></ThumbSlide>
              </Thumb>
            </Outline>

            <Editor>
              <Stage>
                <RulerSide><VRuler /></RulerSide>
                <RulerTop><HRuler /></RulerTop>
                <Canvas>
                  <Slide id="diapositiva-1">
                    <Band />
                    <TitleBox><SlideTitle>FARE CLIC PER INSERIRE IL TITOLO</SlideTitle></TitleBox>
                    <RedRule />
                    <SubtitleBox>Fare clic per inserire il sottotitolo</SubtitleBox>
                  </Slide>
                </Canvas>
              </Stage>
              <NotesPane>
                <Notes aria-label="Note" defaultValue="Fare clic per inserire le note" />
                <Scroller>
                  <PlainButton $w={16} $h={17} aria-label="Scorri su"><svg width="8" height="5" viewBox="0 0 8 5"><path d="M0 5h8L4 0z" fill="#111" /></svg></PlainButton>
                  <svg width="15" height="3" viewBox="0 0 15 3"><rect x=".5" y=".5" width="14" height="2" rx="1" fill="#fff" stroke="#444" /></svg>
                  <PlainButton $w={16} $h={16} aria-label="Scorri giù"><svg width="8" height="5" viewBox="0 0 8 5"><path d="M0 0h8L4 5z" fill="#111" /></svg></PlainButton>
                </Scroller>
              </NotesPane>
            </Editor>
          </Main>

          <StatusBar>
            <StatusItem $w={105}>Diapositiva 1 di 1</StatusItem>
            <Divider $h={20} $mx={0} $c="#44484f" />
            <StatusItem $w={91}>Italiano (Italia)</StatusItem>
            <Divider $h={20} $mx={0} $c="#44484f" />
            <Spacer />
            <Divider $h={20} $mx={3} $c="#44484f" />
            <ViewButton $active aria-label="Normale">
              <svg width="13" height="11" viewBox="0 0 13 11" fill="none" stroke="#222"><rect x=".5" y=".5" width="12" height="10" fill="#fff" /><path d="M4.500 0v11M6.500 2.500h4v3h-4zM4.500 7.500H12" /></svg>
            </ViewButton>
            <ViewButton aria-label="Sequenza diapositive">
              <svg width="12" height="11" viewBox="0 0 12 11" fill="#fff" stroke="#222"><path d="M.5.5h4v4h-4zM7.500.5h4v4h-4zM.5 6.500h4v4h-4zM7.500 6.500h4v4h-4z" /></svg>
            </ViewButton>
            <ViewButton aria-label="Visualizzazione di lettura">
              <svg width="12" height="12" viewBox="0 0 12 12" fill="#fff" stroke="#222"><path d="M.5 1.500H4l2 1 2-1h3.500v8H8l-2 1.500-2-1.500H.5zM6 2.500V11M2 4h2.500M2 6h2.500M2 8h2.500M7.500 4H10M7.500 6H10M7.500 8H10" /></svg>
            </ViewButton>
            <ViewButton aria-label="Presentazione">
              <svg width="12" height="12" viewBox="0 0 12 12" fill="#fff" stroke="#222"><path d="M0 .5h12M1.500 1v4.500h9V1M6 6v4M3 10.500h6" /></svg>
            </ViewButton>
            <ZoomValue>59%</ZoomValue>
            <PlainButton $w={18} $h={18} aria-label="Zoom indietro">
              <svg width="17" height="17" viewBox="0 0 17 17"><circle cx="8.500" cy="8.500" r="7.500" fill="#fff" stroke="#333" strokeWidth="1.200" /><path d="M5 8.500h7" stroke="#111" strokeWidth="2" /></svg>
            </PlainButton>
            <ZoomRange type="range" min={0} max={100} defaultValue={28} aria-label="Zoom" />
            <PlainButton $w={18} $h={18} aria-label="Zoom avanti">
              <svg width="17" height="17" viewBox="0 0 17 17"><circle cx="8.500" cy="8.500" r="7.500" fill="#fff" stroke="#333" strokeWidth="1.200" /><path d="M5 8.500h7M8.500 5v7" stroke="#111" strokeWidth="2" /></svg>
            </PlainButton>
            <PlainButton $w={29} $h={18} aria-label="Adatta alla finestra">
              <svg width="16" height="16" viewBox="0 0 16 16" fill="none" stroke="#222"><rect x=".5" y=".5" width="15" height="15" rx="1" fill="#fff" /><path d="M8 2v4M8 10v4M2 8h4M10 8h4M6.500 3.500L8 2l1.500 1.500M6.500 12.500L8 14l1.500-1.500M3.500 6.500L2 8l1.500 1.500M12.500 6.500L14 8l-1.500 1.500" /><path d="M3 3h1M12 3h1M3 13h1M12 13h1" /></svg>
            </PlainButton>
            <svg width="14" height="18" viewBox="0 0 14 18" fill="#8a8e95"><path d="M10 7h2v2h-2zM10 11h2v2h-2zM6 11h2v2H6zM10 15h2v2h-2zM6 15h2v2H6zM2 15h2v2H2z" /></svg>
          </StatusBar>
        </Frame>
      </Window>
    </>
  );
}
